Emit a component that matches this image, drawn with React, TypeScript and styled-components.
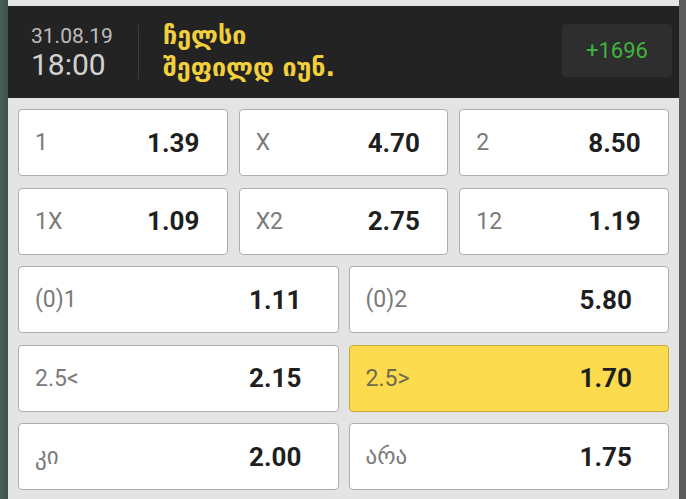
import React from "react";
import styled, { createGlobalStyle } from "styled-components";

const Global = createGlobalStyle`
  html, body { margin: 0; padding: 0; }
  body {
    width: 686px;
    height: 499px;
    overflow: hidden;
    background: linear-gradient(90deg, #46625d 0px, #3f4f4c 8px, #555a5a 70%, #5d5d5d 100%);
    font-family: "Roboto", "DejaVu Sans", sans-serif;
  }
`;

const Panel = styled.div`
  margin: 0 7px 0 8px;
  height: 499px;
  box-sizing: border-box;
  padding-top: 6px;
  background: #e4e4e4;
  display: flex;
  flex-direction: column;
`;

const Header = styled.header`
  height: 92px;
  background: #232323;
  display: flex;
  align-items: center;
  padding: 0 7px 0 23px;
  box-sizing: border-box;
`;

const DateBlock = styled.div`
  width: 107px;
  display: flex;
  flex-direction: column;
  margin-top: 2px;
`;

const DateLine = styled.span`
  font-size: 21px;
  line-height: 24px;
  color: #bdbdbd;
`;

const TimeLine = styled.span`
  font-size: 30px;
  line-height: 34px;
  color: #d2d2d2;
`;

const Separator = styled.div`
  width: 1px;
  height: 54px;
  background: #3c3c3c;
  margin-right: 24px;
`;

const Teams = styled.div`
  flex: 1;
  display: flex;
  flex-direction: column;
  color: #f2cf3d;
  font-family: "DejaVu Sans", sans-serif;
  font-weight: bold;
  font-size: 25px;
  line-height: 32px;
  margin-top: 0px;
`;

const Score = styled.div`
  width: 110px;
  height: 53px;
  background: #2e2e2e;
  border-radius: 4px;
  display: flex;
  align-items: center;
  justify-content: center;
  color: #3fb33e;
  font-size: 22px;
  margin-top: -3px;
`;

const Board = styled.div`
  padding: 11px 10px 0 10px;
  display: flex;
  flex-direction: column;
  gap: 11.5px;
`;

const Row = styled.div<{ $cols: number }>`
  display: grid;
  grid-template-columns: repeat(${(p) => p.$cols}, 1fr);
  column-gap: ${(p) => (p.$cols === 3 ? 11 : 10)}px;
`;

const Cell = styled.div<{ $labelWidth: number; $active?: boolean }>`
  height: 67px;
  box-sizing: border-box;
  border: 1px solid ${(p) => (p.$active ? "#c7ab3a" : "#adadad")};
  border-radius: 4px;
  background: ${(p) => (p.$active ? "#fcdc4e" : "#ffffff")};
  display: grid;
  grid-template-columns: ${(p) => p.$labelWidth}px 1fr;
  align-items: center;
  padding-left: 16px;
`;

const Label = styled.span<{ $active?: boolean }>`
  font-size: 23px;
  color: ${(p) => (p.$active ? "#6f6a4c" : "#7a7a7a")};
  font-family: "Roboto", "DejaVu Sans", sans-serif;
`;

const Odds = styled.span`
  font-size: 26px;
  font-weight: 700;
  color: #1f1f1f;
`;

type Bet = { label: string; odds: string; active?: boolean };

const rows: Bet[][] = [
  [
    { label: "1", odds: "1.39" },
    { label: "X", odds: "4.70" },
    { label: "2", odds: "8.50" },
  ],
  [
    { label: "1X", odds: "1.09" },
    { label: "X2", odds: "2.75" },
    { label: "12", odds: "1.19" },
  ],
  [
    { label: "(0)1", odds: "1.11" },
    { label: "(0)2", odds: "5.80" },
  ],
  [
    { label: "2.5<", odds: "2.15" },
    { label: "2.5>", odds: "1.70", active: true },
  ],
  [
    { label: "კი", odds: "2.00" },
    { label: "არა", odds: "1.75" },
  ],
];

export default function App() {
  return (
    <>
      <Global />
      <Panel>
        <Header>
          <DateBlock>
            <DateLine>31.08.19</DateLine>
            <TimeLine>18:00</TimeLine>
          </DateBlock>
          <Separator />
          <Teams>
            <span>ჩელსი</span>
            <span>შეფილდ იუნ.</span>
          </Teams>
          <Score>+1696</Score>
        </Header>
        <Board>
          {rows.map((row, i) => (
            <Row key={i} $cols={row.length}>
              {row.map((b) => (
                <Cell
                  key={b.label}
                  $active={b.active}
                  $labelWidth={row.length === 3 ? 112 : 214}
                >
                  <Label $active={b.active}>{b.label}</Label>
                  <Odds>{b.odds}</Odds>
                </Cell>
              ))}
            </Row>
          ))}
        </Board>
      </Panel>
    </>
  );
}
